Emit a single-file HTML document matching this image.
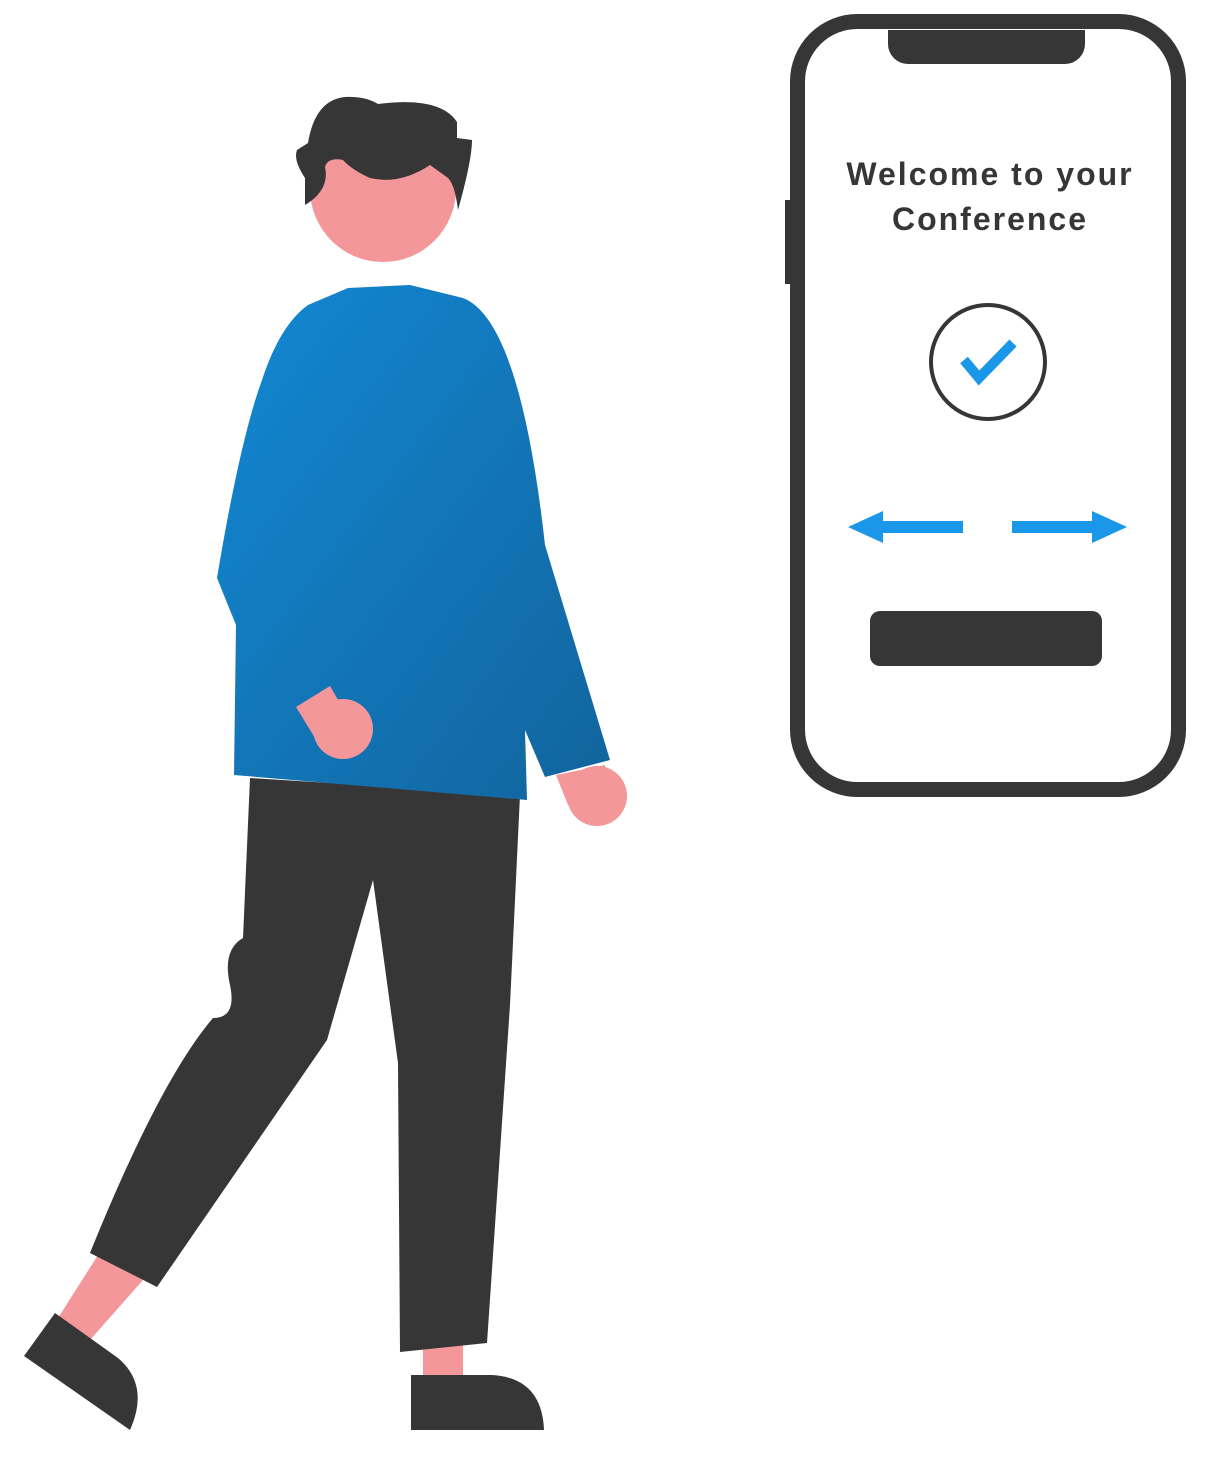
<!DOCTYPE html>
<html><head><meta charset="utf-8"><style>
html,body{margin:0;padding:0;background:#fff;}
svg{display:block}
</style></head><body>
<svg width="1222" height="1467" viewBox="0 0 1222 1467" xmlns="http://www.w3.org/2000/svg">
<defs>
<linearGradient id="g" x1="0" y1="0" x2="1" y2="1">
<stop offset="0" stop-color="#1288d4"/><stop offset="1" stop-color="#12649c"/>
</linearGradient>
</defs>
<!-- phone -->
<rect x="785" y="200" width="10" height="84" fill="#363636"/>
<rect x="797.5" y="21.5" width="381" height="768" rx="60" fill="#fff" stroke="#363636" stroke-width="15"/>
<path d="M888 30 H1085 V44 a20 20 0 0 1 -20 20 H908 a20 20 0 0 1 -20 -20 Z" fill="#363636"/>
<text x="990" y="185" text-anchor="middle" font-family="Liberation Sans, sans-serif" font-weight="bold" font-size="32" letter-spacing="2" fill="#363636">Welcome to your</text>
<text x="990" y="230" text-anchor="middle" font-family="Liberation Sans, sans-serif" font-weight="bold" font-size="32" letter-spacing="2" fill="#363636">Conference</text>
<circle cx="988" cy="362" r="57" fill="none" stroke="#363636" stroke-width="4"/>
<polyline points="964,360 979,378 1013,343" fill="none" stroke="#1a97e8" stroke-width="10"/>
<rect x="878" y="521" width="85" height="12" fill="#1a97e8"/>
<polygon points="848,527 883,511 883,543" fill="#1a97e8"/>
<rect x="1012" y="521" width="84" height="12" fill="#1a97e8"/>
<polygon points="1127,527 1092,511 1092,543" fill="#1a97e8"/>
<rect x="870" y="611" width="232" height="55" rx="10" fill="#363636"/>
<!-- person legs skin -->
<polygon points="98,1255 143,1280 90,1340 58,1318" fill="#f4979a"/>
<rect x="423" y="1340" width="40" height="40" fill="#f4979a"/>
<!-- shoes -->
<path d="M24 1356 L55 1313 L118 1358 Q150 1385 130 1430 Z" fill="#363636"/>
<path d="M411 1375 H492 Q542 1378 544 1430 H411 Z" fill="#363636"/>
<!-- pants -->
<path d="M250 778 L520 795 L510 1005 L487 1343 L400 1352 L398 1063 L373 880 L327 1040 L157 1287 L90 1253 Q160 1080 213 1018 Q237 1018 230 985 Q222 950 243 938 Z" fill="#363636"/>
<!-- right hand -->
<polygon points="556,775 605,765 610,800 568,805" fill="#f4979a"/>
<circle cx="597" cy="796" r="30" fill="#f4979a"/>
<!-- sweater -->
<path d="M308 305 L348 288 L410 285 L463 298 Q520 320 545 545 L610 760 L545 777 L525 730 L527 800 L234 775 L236 625 L217 578 Q240 440 262 380 Q280 325 308 305 Z" fill="url(#g)"/>
<!-- left hand -->
<polygon points="296,707 330,686 345,712 315,738" fill="#f4979a"/>
<circle cx="343" cy="729" r="30" fill="#f4979a"/>
<!-- head -->
<circle cx="383" cy="189" r="73" fill="#f4979a"/>
<path d="M305 205 V178 Q293 160 297 150 L308 143 Q315 100 345 97 Q365 96 378 104 Q440 96 457 122 V138 L472 140 Q472 160 458 210 Q455 185 448 178 L430 165 Q400 185 370 178 Q352 170 343 160 Q328 157 325 167 Q330 190 305 205 Z" fill="#363636"/>
</svg>
</body></html>
